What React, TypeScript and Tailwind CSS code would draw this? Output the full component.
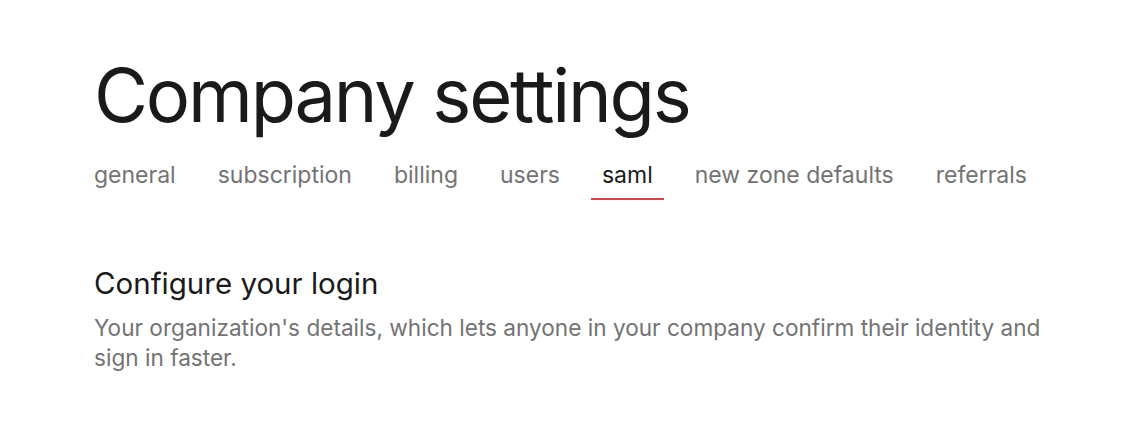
import React from "react";

const tabs = ["general", "subscription", "billing", "users", "saml", "new zone defaults", "referrals"];

export default function App() {
  return (
    <div className="min-h-[440px] w-full bg-white text-[#1a1a1a]" style={{ fontFamily: "Inter, 'Liberation Sans', sans-serif" }}>
      <div className="pl-[94px] pt-[50px]">
        <h1 className="text-[74px] leading-[90px] tracking-[-2.2px] font-normal text-[#1a1a1a]">Company settings</h1>
        <nav className="mt-[20px] -ml-[11px] flex gap-[20px]">
          {tabs.map((t) => {
            const active = t === "saml";
            return (
              <span
                key={t}
                className={
                  active
                    ? "px-[11px] pb-[8px] text-[23px] leading-[30px] text-[#1a1a1a] border-b-2 border-[#dc4444]"
                    : "px-[11px] pb-[8px] text-[23px] leading-[30px] text-[#737373] border-b-2 border-transparent"
                }
              >
                {t}
              </span>
            );
          })}
        </nav>
        <h2 className="mt-[65px] text-[29.5px] leading-[36px] font-normal text-[#1a1a1a]">Configure your login</h2>
        <p className="mt-[12px] max-w-[962px] text-[22.6px] leading-[30px] text-[#737373]">
          Your organization's details, which lets anyone in your company confirm their identity and sign in faster.
        </p>
      </div>
    </div>
  );
}
